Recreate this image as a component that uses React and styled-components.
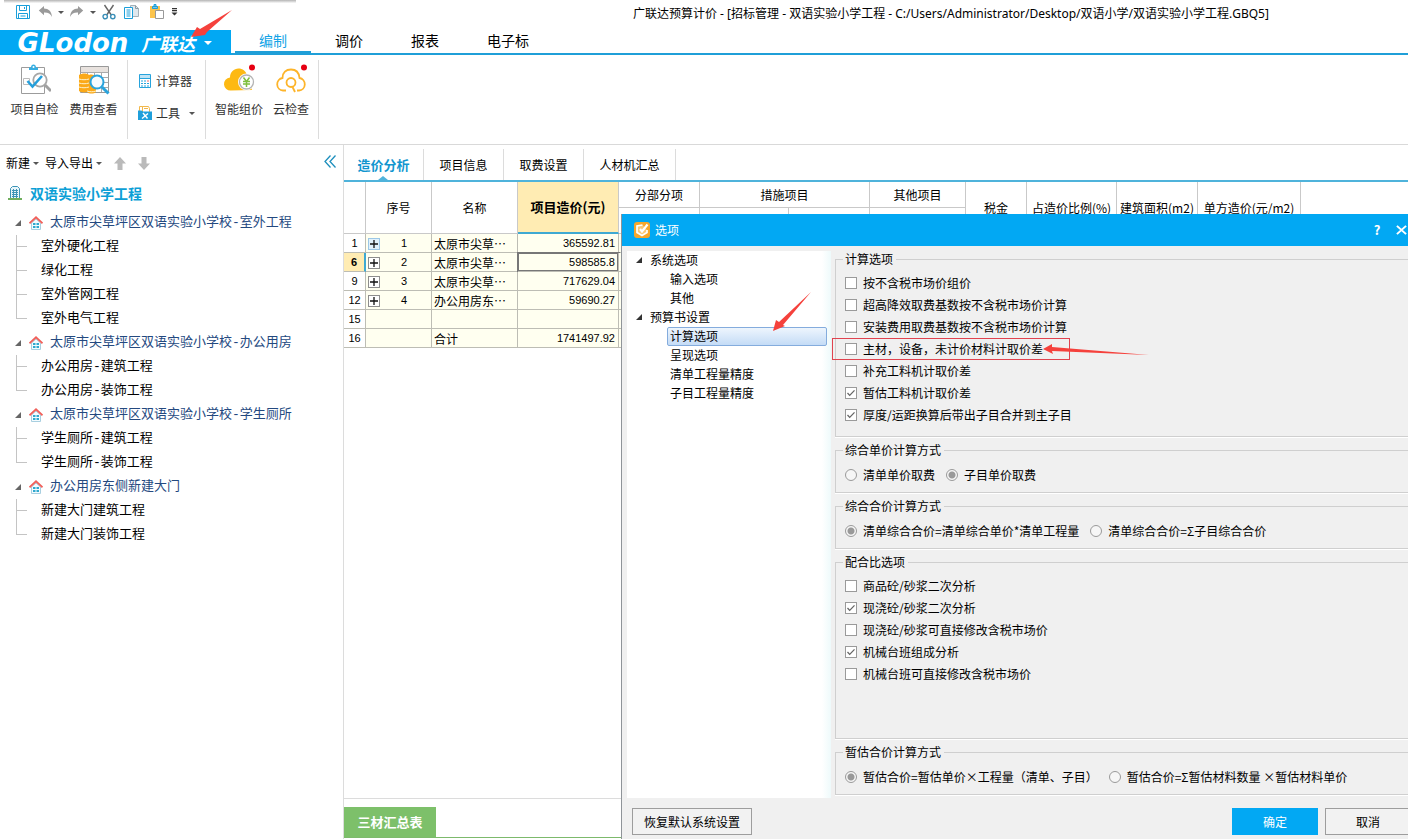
import React from 'react';
import styled, { createGlobalStyle, css } from 'styled-components';

const blue = '#02a8f3';
const lineBlue = '#4fb3db';

const GlobalStyle = createGlobalStyle`
  *, *::before, *::after { box-sizing: border-box; }
  body { margin: 0; background: #fff; }
  body, button, input, table {
    font-family: 'Noto Sans CJK SC', 'Liberation Sans', sans-serif;
    font-size: 12px;
    line-height: 16px;
    color: #000;
  }
  button { border: 0; padding: 0; background: none; }
  ul { list-style: none; margin: 0; padding: 0; }
`;

const Page = styled.div`
  position: relative;
  display: flex;
  flex-direction: column;
  min-height: 100vh;
  overflow: hidden;
`;

/* ---------- title bar ---------- */
const TitleBar = styled.header`
  display: flex;
  align-items: center;
  height: 30px;
  padding: 0 12px 6px;
`;
const TopShade = styled.div`
  position: absolute;
  top: 0;
  left: 4px;
  width: 292px;
  height: 3px;
  background: linear-gradient(#b4b4b4, #fafafa);
`;
const QuickButton = styled.button`
  display: flex;
  align-items: center;
  justify-content: center;
  width: ${(p) => p.$w}px;
  height: 18px;
`;
const WindowTitle = styled.h1`
  margin: 0 0 0 453px;
  padding-top: 4px;
  font: 400 12px/16px 'Noto Sans', 'Noto Sans CJK SC', sans-serif;
  white-space: nowrap;
`;

/* ---------- main menu ---------- */
const MenuBar = styled.nav`
  display: flex;
  height: 25px;
  border-bottom: 2px solid #1f9fd8;
`;
const Brand = styled.button`
  display: flex;
  align-items: center;
  width: 231px;
  height: 25px;
  margin-right: 4px;
  padding-left: 14px;
  background: ${blue};
  color: #fff;
  white-space: nowrap;
`;
const BrandLatin = styled.span`
  width: 118px;
  font: italic 700 26px/24px 'DejaVu Sans', sans-serif;
`;
const BrandHan = styled.span`
  width: 72px;
  font: italic 700 18px/24px 'Noto Sans CJK SC', sans-serif;
`;
const MenuTab = styled.button`
  height: 23px;
  padding: 0 24px 2px;
  font-size: 14px;
  line-height: 18px;
  border-bottom: 2px solid ${(p) => (p.$active ? '#1f9fd8' : 'transparent')};
  color: ${(p) => (p.$active ? '#12a3e6' : '#000')};
`;

/* ---------- ribbon ---------- */
const Ribbon = styled.div`
  display: flex;
  height: 90px;
  padding: 5px 0;
  border-bottom: 1px solid #d9d9d9;
`;
const RibbonGroup = styled.div`
  display: flex;
  flex-direction: ${(p) => (p.$column ? 'column' : 'row')};
  padding: ${(p) => p.$pad};
  border-right: 1px solid #dcdcdc;
`;
const BigButton = styled.button`
  display: flex;
  flex-direction: column;
  align-items: center;
  gap: 5px;
  width: ${(p) => p.$w}px;
  height: 60px;
  color: #333;
  white-space: nowrap;
`;
const SmallButton = styled.button`
  display: flex;
  align-items: center;
  gap: 4px;
  width: 57px;
  height: 32px;
  color: #333;
  white-space: nowrap;
`;
const PushRight = styled.span`
  display: flex;
  margin-left: auto;
`;

/* ---------- workspace ---------- */
const Workspace = styled.div`
  display: flex;
  flex: 1;
`;
const Sidebar = styled.aside`
  flex: none;
  width: 344px;
  border-right: 1px solid #dcdcdc;
`;
const SideTools = styled.div`
  display: flex;
  align-items: center;
  height: 34px;
  padding: 2px 7px 0 6px;
`;
const SideButton = styled.button`
  display: flex;
  align-items: center;
  gap: 3px;
  margin-right: 6px;
  white-space: nowrap;
`;
const MoveButton = styled.button`
  display: flex;
  justify-content: center;
  width: 24px;
`;
const ProjectTitle = styled.h2`
  display: flex;
  align-items: center;
  gap: 8px;
  height: 28px;
  margin: 0 0 4px;
  padding-left: 8px;
  font-size: 14px;
  line-height: 20px;
  color: #0d9fd6;
`;
const TreeNode = styled.div`
  display: flex;
  align-items: center;
  height: 24px;
  padding-left: 14px;
  font: 400 13px/20px 'Liberation Mono', 'Noto Sans CJK SC', sans-serif;
  color: #24497f;
  white-space: nowrap;
  svg { margin-right: 7px; }
`;
const TreeLeaf = styled.li`
  display: flex;
  align-items: center;
  height: 24px;
  font: 400 13px/20px 'Liberation Mono', 'Noto Sans CJK SC', sans-serif;
  white-space: nowrap;
  &::before {
    content: '';
    width: 11px;
    height: 24px;
    margin: 0 14px 0 16px;
    background:
      linear-gradient(#c4c4c4, #c4c4c4) 0 0 / 1px ${(p) => (p.$last ? '12px' : '24px')} no-repeat,
      linear-gradient(#c4c4c4, #c4c4c4) 0 11px / 11px 1px no-repeat;
  }
`;

const Content = styled.main`
  display: flex;
  flex-direction: column;
  flex: 1;
  min-width: 0;
`;
const ContentTabs = styled.div`
  display: flex;
  height: 37px;
  padding-top: 4px;
  border-bottom: 2px solid ${lineBlue};
`;
const ContentTab = styled.button`
  position: relative;
  width: ${(p) => p.$w}px;
  height: 31px;
  border-right: 1px solid #dcdcdc;
  white-space: nowrap;
  ${(p) => p.$active && css`
    font-size: 13px;
    font-weight: 700;
    color: #1296cf;
    &::after {
      content: '';
      position: absolute;
      left: 34px;
      bottom: 0;
      border: 5px solid transparent;
      border-top: 0;
      border-bottom: 4px solid ${lineBlue};
    }
  `}
`;
const TableArea = styled.div`
  flex: 1;
  border-bottom: 1px solid #dcdcdc;
`;
const Table = styled.table`
  table-layout: fixed;
  width: 957px;
  border-collapse: separate;
  border-spacing: 0;
`;
const Th = styled.th`
  height: 26px;
  padding: 0;
  font-weight: ${(p) => (p.$hot ? 700 : 400)};
  font-size: ${(p) => (p.$hot ? 13 : 12)}px;
  white-space: nowrap;
  border-right: 1px solid #c9c9c9;
  border-bottom: ${(p) => (p.$hot ? '2px solid #3fa9d2' : '1px solid #c9c9c9')};
  background: ${(p) => (p.$hot ? '#ffecb3' : '#fff')};
`;
const Td = styled.td`
  height: 19px;
  padding: 1px 3px 0 2px;
  overflow: hidden;
  white-space: nowrap;
  text-align: ${(p) => p.$align || 'left'};
  background: #fffff0;
  border-right: 1px solid #bdbdb4;
  border-bottom: 1px solid #bdbdb4;
  line-height: 17px;
  ${(p) => p.$num && css`font-family: 'Liberation Sans', sans-serif; font-size: 11px;`}
  ${(p) => p.$current && css`box-shadow: inset 0 0 0 1px #777, 0 0 0 1px #777;`}
`;
const RowHead = styled.th`
  height: 19px;
  padding: 1px 0 0;
  font: ${(p) => (p.$current ? 700 : 400)} 11px/17px 'Liberation Sans', sans-serif;
  background: ${(p) => (p.$current ? '#ffecb3' : '#fff')};
  border-right: ${(p) => (p.$current ? '2px solid #3fa9d2' : '1px solid #bdbdb4')};
  border-bottom: 1px solid #bdbdb4;
`;
const IndexCell = styled.div`
  display: grid;
  grid-template-columns: 12px 1fr;
  align-items: center;
  text-align: center;
`;
const Expander = styled.button`
  display: flex;
  align-items: center;
  justify-content: center;
  width: 12px;
  height: 12px;
  border: 1px solid ${(p) => (p.$tint ? '#9cc7e6' : '#8d8d8d')};
  background: ${(p) => (p.$tint ? '#e1f1fb' : '#fff')};
`;
const BottomBar = styled.div`
  display: flex;
  height: 40px;
  padding-top: 8px;
`;
const SheetTabs = styled.div`
  flex: 1;
  height: 31px;
  border-bottom: 1px solid #7dba6c;
`;
const SheetTab = styled.button`
  width: 92px;
  height: 30px;
  background: #7dc06a;
  color: #fff;
  font-size: 13px;
  font-weight: 700;
`;

/* ---------- options dialog ---------- */
const Dialog = styled.section`
  position: absolute;
  top: 214px;
  left: 621px;
  right: -12px;
  bottom: 0;
  display: flex;
  flex-direction: column;
  background: #f0f0f0;
  border-left: 1px solid #8f9499;
`;
const DialogTitle = styled.header`
  display: flex;
  align-items: center;
  height: 32px;
  padding: 0 12px;
  gap: 5px;
  background: ${blue};
  color: #fff;
`;
const TitleButtons = styled.span`
  display: flex;
  gap: 10px;
  margin-left: auto;
`;
const TitleButton = styled.button`
  display: flex;
  align-items: center;
  justify-content: center;
  width: 14px;
  height: 16px;
  color: #fff;
  font-size: 13px;
  font-weight: 700;
`;
const DialogBody = styled.div`
  display: flex;
  flex: 1;
  gap: 4px;
  padding: 5px 0 0 5px;
`;
const OptionTree = styled.ul`
  width: 204px;
  background: linear-gradient(90deg, #fff 195px, #eefafb 204px);
`;
const OptionParent = styled.li`
  display: flex;
  align-items: center;
  gap: 7px;
  height: 19px;
  padding: 0 0 2px 8px;
`;
const OptionItem = styled.li`
  position: relative;
  height: 19px;
  margin: 0 4px 0 40px;
  padding-left: 2px;
  line-height: 15px;
  border: 1px solid ${(p) => (p.$selected ? '#84acdd' : 'transparent')};
  border-radius: 2px;
  background: ${(p) => (p.$selected ? 'linear-gradient(#eef5fd, #c4dcf6)' : 'none')};
`;
const Groups = styled.div`
  display: flex;
  flex-direction: column;
  flex: 1;
  gap: 5px;
  padding-bottom: 3px;
`;
const Group = styled.fieldset`
  margin: 0;
  padding: ${(p) => (p.$row ? '6px 9px' : '5px 9px 10px')};
  min-width: 0;
  flex: ${(p) => (p.$grow ? '1' : 'none')};
  border: 1px solid #cfcfcf;
  box-shadow: 0 1px 0 #fff;
`;
const Legend = styled.legend`
  padding: 0 3px 0 2px;
  margin-left: -2px;
  height: 16px;
`;
const RadioRow = styled.div`
  display: flex;
  gap: 11px;
`;
const Choice = styled.label`
  position: relative;
  display: flex;
  align-items: center;
  gap: 6px;
  width: max-content;
  height: 22px;
  white-space: pre;
`;
const CheckInput = styled.input`
  appearance: none;
  width: 12px;
  height: 12px;
  margin: 0;
  border: 1px solid #9a9a9a;
  background: #fff;
  &:checked {
    background: #fff url("data:image/svg+xml,%3Csvg xmlns='http://www.w3.org/2000/svg' viewBox='0 0 10 10'%3E%3Cpath d='M1.5 5l2.2 2.4L8.5 2.4' fill='none' stroke='%23666' stroke-width='1.3'/%3E%3C/svg%3E");
  }
`;
const RadioInput = styled.input`
  appearance: none;
  width: 12px;
  height: 12px;
  margin: 0;
  border: 1px solid #9a9a9a;
  border-radius: 50%;
  background: #f6f6f6;
  &:checked { background: radial-gradient(circle, #999 0 3px, #f6f6f6 4px); }
`;
const Wide = styled.span`
  display: inline-block;
  width: 12px;
  text-align: center;
`;
const Marked = styled.span`
  position: absolute;
  top: 0;
  left: -13px;
  width: 238px;
  height: 22px;
  border: 1px solid #e0434f;
  pointer-events: none;
`;
const ArrowSvg = styled.svg`
  position: absolute;
  left: ${(p) => p.$x}px;
  top: ${(p) => p.$y}px;
  z-index: 2;
  overflow: visible;
  pointer-events: none;
`;
const DialogFooter = styled.footer`
  display: flex;
  align-items: center;
  gap: 7px;
  height: 41px;
  padding: 6px 9px 0 10px;
`;
const FooterButton = styled.button`
  width: ${(p) => p.$w}px;
  height: 27px;
  margin-left: ${(p) => (p.$push ? 'auto' : '0')};
  border: 1px solid ${(p) => (p.$primary ? blue : '#9d9d9d')};
  background: ${(p) => (p.$primary ? blue : '#f2f2f2')};
  color: ${(p) => (p.$primary ? '#fff' : '#000')};
`;

/* ---------- drawings ---------- */
const Caret = ({ color = '#555', w = 6 }) => (
  <svg width={w} height={Math.ceil(w / 2)} viewBox="0 0 6 3"><path d="M0 0h6L3 3z" fill={color} /></svg>
);
const Corner = ({ color = '#666' }) => (
  <svg width="8" height="8" viewBox="0 0 8 8"><path d="M7 1v6H1z" fill={color} /></svg>
);
const SaveIcon = () => (
  <svg width="14" height="14" viewBox="0 0 14 14" fill="none" stroke="#1a9fda">
    <path d="M.5.5h13v13H.5zM3.5.5v5h7v-5M2.5 13.5v-5h9v5M4.500 11h5" /><path d="M8.500 2v2" />
  </svg>
);
const UndoIcon = ({ flip }) => (
  <svg width="15" height="12" viewBox="0 0 15 12">
    <path transform={flip ? 'translate(15 0) scale(-1 1)' : undefined} d="M6 0v2.600c4.500 0 7.600 2.700 8 8.400C12.500 7.800 10 6.400 6 6.600v2.700L.8 4.600z" fill="#9a9a9a" />
  </svg>
);
const CutIcon = () => (
  <svg width="14" height="16" viewBox="0 0 14 16" fill="none" strokeWidth="1.400">
    <path d="M2.500 1l6.800 10M11.500 1L4.700 11" stroke="#666" />
    <circle cx="3.200" cy="12.600" r="2.200" stroke="#3a8fb8" /><circle cx="10.800" cy="12.600" r="2.200" stroke="#3a8fb8" />
  </svg>
);
const CopyIcon = () => (
  <svg width="16" height="16" viewBox="0 0 16 16" fill="#fff">
    <path d="M6.500 1.500h5l3 3v8h-8z" stroke="#a5b1b8" fill="#dfe8ee" /><path d="M11.500 1.500v3h3" fill="none" stroke="#8e9aa0" />
    <path d="M.5 3.500h8v11h-8z" stroke="#1a9fda" /><path d="M2.500 6h4M2.500 8h4M2.500 10h4M2.500 12h4" stroke="#1a9fda" />
  </svg>
);
const PasteIcon = () => (
  <svg width="16" height="16" viewBox="0 0 16 16">
    <path d="M1 2h10v12H1z" fill="#fcc44c" /><path d="M3.500 2.500h5v2h-5zM5 .5h2v2H5z" fill="#7cc5e8" stroke="#1a9fda" />
    <path d="M6.500 6.500h8v8h-8z" fill="#fff" stroke="#999" />
  </svg>
);
const MoreIcon = () => (
  <svg width="7" height="8" viewBox="0 0 7 8" fill="#333"><path d="M1 0h5v1.200H1zM1 2h5v1.200H1zM.5 4.500h6l-3 3z" /></svg>
);
const CheckupIcon = () => (
  <svg width="32" height="32" viewBox="0 0 32 32" fill="none">
    <path d="M2.500 3.500h23v26h-23z" stroke="#9c9c9c" fill="#fff" />
    <path d="M10 3.500h2c0-2 1-3 2.500-3s2.500 1 2.500 3h2v2.500h-9z" fill="#35aee2" /><circle cx="14.500" cy="3" r="1" fill="#fff" />
    <path d="M4.500 14.500h6v6h-6z" stroke="#bbb" />
    <circle cx="21" cy="16" r="6.700" stroke="#a7a7a7" strokeWidth="1.800" fill="#fff" />
    <path d="M26 21l6 6" stroke="#a0a0a0" strokeWidth="3" />
    <path d="M8.500 17l5 5.500L23 12" stroke="#259fdb" strokeWidth="2.600" />
  </svg>
);
const FeeIcon = () => (
  <svg width="32" height="32" viewBox="0 0 32 32" fill="none">
    <path d="M2.500 2.500h28v26h-28z" stroke="#999" fill="#fff" /><path d="M3 3h27v5H3z" fill="#e8e2de" />
    <path d="M2.500 8.500h28M2.500 13.500h28M2.500 18.500h28M2.500 23.500h28M9.500 8v20M16.500 8v20M23.500 8v20" stroke="#aaa" />
    <path d="M1 11c3-2 8-2 10 0 3-1 6 0 7 2v15c-2 2-7 2-9 0-3 1-7 0-8-1z" fill="#fba918" />
    <path d="M1 15c3 1 7 1 10 0M1 19c3 1 7 1 10 0M1 23c3 1 7 1 10 0M9 27c3 1 6 1 9 0" stroke="#fff2cc" />
    <circle cx="19" cy="18" r="6.500" stroke="#2aa4dd" strokeWidth="2" fill="#f6fbfe" /><path d="M24 23l6.500 6.500" stroke="#2aa4dd" strokeWidth="3" />
  </svg>
);
const CalculatorIcon = () => (
  <svg width="14" height="16" viewBox="0 0 14 16" fill="none">
    <path d="M1.500 1.500h11v13h-11z" stroke="#27a3dc" /><path d="M2 2h10v3H2z" fill="#bfe3f5" /><path d="M2 5.500h10" stroke="#27a3dc" />
    <path d="M3 8h2M6 8h2M3 10.500h2M6 10.500h2M3 13h2M6 13h2M9 10.500h2M9 13h2" stroke="#27a3dc" /><path d="M9 8h2" stroke="#e66" />
  </svg>
);
const ToolsIcon = () => (
  <svg width="14" height="16" viewBox="0 0 14 16" fill="none">
    <path d="M1.500 1.500h5v5h-5z" stroke="#f2b84b" fill="#fff" /><path d="M4.500 1.500h6l1 2v4h-7z" stroke="#f2b84b" fill="#fff" /><path d="M6 3.500h4" stroke="#f2b84b" />
    <path d="M0 5.500h3.500l1.500 1h9V15H0z" fill="#1f9fdb" /><path d="M4 13.500l6-5M5 8l4.500 5.500" stroke="#fff" strokeWidth="1.400" />
  </svg>
);
const SmartPriceIcon = () => (
  <svg width="32" height="32" viewBox="0 0 32 32" fill="none">
    <path d="M8 26.500a6.500 6.500 0 0 1-1-13C7 8 11 4.500 15.500 4.500c4 0 7.500 2.500 8.300 6.500 3 .5 5 3 5 6v9z" fill="#fdb913" />
    <circle cx="23.500" cy="18" r="8.500" fill="#fff" /><circle cx="23.500" cy="18" r="7" stroke="#b4b4b4" strokeWidth="1.300" fill="#fff" />
    <path d="M20.500 13.500l3 4 3-4M20 17.500h7M20 20h7M23.500 17v6" stroke="#7fbf3f" strokeWidth="1.500" />
    <circle cx="29" cy="3.500" r="3" fill="#e60012" />
  </svg>
);
const CloudCheckIcon = () => (
  <svg width="32" height="32" viewBox="0 0 32 32" fill="none">
    <path d="M11 26.500H8A6.300 6.300 0 0 1 7.500 14C7.500 8.500 11 5.500 16 5.500S24 8.500 24.500 14a6.300 6.300 0 0 1-.5 12.500h-2" stroke="#fdb42a" strokeWidth="1.800" />
    <circle cx="16" cy="18.500" r="4.500" stroke="#fdb42a" strokeWidth="1.800" /><path d="M17.500 23l2.500 5" stroke="#fdb42a" strokeWidth="1.800" />
    <circle cx="29" cy="3.500" r="3" fill="#e60012" />
  </svg>
);
const BuildingIcon = () => (
  <svg width="14" height="14" viewBox="0 0 14 14" fill="none">
    <path d="M2.500 12.500v-10L4.500.5h5l2 2v10" stroke="#3d94b6" fill="#e9f5fa" /><path d="M4 4.500h6M4 6.500h6M4 8.500h6M4 10.500h6M5.500 3v9M8.500 3v9" stroke="#3d94b6" />
    <path d="M0 13h14" stroke="#6fae5c" strokeWidth="2" />
  </svg>
);
const HomeIcon = () => (
  <svg width="14" height="14" viewBox="0 0 14 14" fill="none">
    <path d="M2.500 7v6.500h9V7L7 3z" fill="#f4fbfe" stroke="#a8cfe0" /><path d="M.5 7.300L7 1.300l6.500 6" stroke="#f0605a" strokeWidth="1.800" />
    <path d="M4 7h2.500v2H4zM7.500 7H10v2H7.500zM4 10h2.500v2H4zM7.500 10H10v2H7.500z" fill="#2fa9cf" />
  </svg>
);
const MoveArrow = ({ down }) => (
  <svg width="12" height="13" viewBox="0 0 12 13"><path transform={down ? 'rotate(180 6 6.500)' : undefined} d="M6 0l6 6.500H8.500V13h-5V6.500H0z" fill="#bababa" /></svg>
);
const CollapseIcon = () => (
  <svg width="12" height="13" viewBox="0 0 12 13" fill="none" stroke="#1d8fbd" strokeWidth="1.300"><path d="M6.500.5l-5.500 6 5.500 6M11.500.5l-5.500 6 5.500 6" /></svg>
);
const PlusIcon = () => (
  <svg width="8" height="8" viewBox="0 0 8 8"><path d="M0 4h8M4 0v8" stroke="#111" strokeWidth="1.300" /></svg>
);
const OptionsIcon = () => (
  <svg width="16" height="16" viewBox="0 0 16 16" fill="none">
    <rect width="16" height="16" rx="3" fill="#f7a72c" />
    <path d="M8.500 3L3 4v6.500l5 3 5-3V8" stroke="#fff" strokeWidth="1.700" fill="#fbc876" /><path d="M6 7l2 2.500 5.500-7" stroke="#fff" strokeWidth="2.200" />
  </svg>
);
const CloseIcon = () => (
  <svg width="11" height="10" viewBox="0 0 12 10"><path d="M1 .5l10 9M11 .5l-10 9" stroke="#fff" strokeWidth="2.200" /></svg>
);
const Arrow = ({ x, y, w, h, points }) => (
  <ArrowSvg $x={x} $y={y} width={w} height={h} viewBox={`0 0 ${w} ${h}`} aria-hidden="true"><polygon points={points} fill="#f5413c" /></ArrowSvg>
);

/* ---------- data ---------- */
const tree = [
  ['太原市尖草坪区双语实验小学校-室外工程', ['室外硬化工程', '绿化工程', '室外管网工程', '室外电气工程']],
  ['太原市尖草坪区双语实验小学校-办公用房', ['办公用房-建筑工程', '办公用房-装饰工程']],
  ['太原市尖草坪区双语实验小学校-学生厕所', ['学生厕所-建筑工程', '学生厕所-装饰工程']],
  ['办公用房东侧新建大门', ['新建大门建筑工程', '新建大门装饰工程']],
];
const columns = [22, 66, 86, 101, 81, 89, 81, 96, 61, 90, 81, 103];
const rows = [
  ['1', '1', '太原市尖草…', '365592.81'],
  ['6', '2', '太原市尖草…', '598585.8'],
  ['9', '3', '太原市尖草…', '717629.04'],
  ['12', '4', '办公用房东…', '59690.27'],
  ['15', '', '', ''],
  ['16', '', '合计', '1741497.92'],
];
const calcOptions = [
  ['按不含税市场价组价', false],
  ['超高降效取费基数按不含税市场价计算', false],
  ['安装费用取费基数按不含税市场价计算', false],
  ['主材，设备，未计价材料计取价差', false, true],
  ['补充工料机计取价差', false],
  ['暂估工料机计取价差', true],
  ['厚度/运距换算后带出子目合并到主子目', true],
];
const mixOptions = [
  ['商品砼/砂浆二次分析', false],
  ['现浇砼/砂浆二次分析', true],
  ['现浇砼/砂浆可直接修改含税市场价', false],
  ['机械台班组成分析', true],
  ['机械台班可直接修改含税市场价', false],
];

const Check = ({ item: [label, on, marked] }) => (
  <Choice>
    <CheckInput type="checkbox" defaultChecked={on} />
    {label}
    {marked && <Marked />}
    {marked && <Arrow x={198} y={6} w={106} h={12} points="0,5 9,0 9,3 106,11 9,7 10,10" />}
  </Choice>
);
const Radio = ({ name, on, children }) => (
  <Choice><RadioInput type="radio" name={name} defaultChecked={on} /><span>{children}</span></Choice>
);

export default function App() {
  return (
    <Page>
      <GlobalStyle />
      <TopShade />
      <TitleBar>
        <QuickButton $w={22} aria-label="保存"><SaveIcon /></QuickButton>
        <QuickButton $w={22} aria-label="撤销"><UndoIcon /></QuickButton>
        <QuickButton $w={10} aria-label="撤销列表"><Caret /></QuickButton>
        <QuickButton $w={20} aria-label="恢复"><UndoIcon flip /></QuickButton>
        <QuickButton $w={14} aria-label="恢复列表"><Caret /></QuickButton>
        <QuickButton $w={18} aria-label="剪切"><CutIcon /></QuickButton>
        <QuickButton $w={28} aria-label="复制"><CopyIcon /></QuickButton>
        <QuickButton $w={22} aria-label="粘贴"><PasteIcon /></QuickButton>
        <QuickButton $w={12} aria-label="更多"><MoreIcon /></QuickButton>
        <WindowTitle>广联达预算计价 - [招标管理 - 双语实验小学工程 - C:/Users/Administrator/Desktop/双语小学/双语实验小学工程.GBQ5]</WindowTitle>
      </TitleBar>
      <MenuBar>
        <Brand><BrandLatin>GLodon</BrandLatin><BrandHan>广联达</BrandHan><Caret color="#fff" w={8} /></Brand>
        <MenuTab $active>编制</MenuTab>
        <MenuTab>调价</MenuTab>
        <MenuTab>报表</MenuTab>
        <MenuTab>电子标</MenuTab>
      </MenuBar>
      <Arrow x={191} y={10} w={42} h={28} points="0,27 6,17 9,19 41,0 16,22 14,25" />
      <Ribbon>
        <RibbonGroup $pad="4px 4px 0 5px">
          <BigButton $w={59}><CheckupIcon />项目自检</BigButton>
          <BigButton $w={59}><FeeIcon />费用查看</BigButton>
        </RibbonGroup>
        <RibbonGroup $column $pad="5px 10px">
          <SmallButton><CalculatorIcon />计算器</SmallButton>
          <SmallButton><ToolsIcon />工具<PushRight><Caret /></PushRight></SmallButton>
        </RibbonGroup>
        <RibbonGroup $pad="4px 1px 0 7px">
          <BigButton $w={52}><SmartPriceIcon />智能组价</BigButton>
          <BigButton $w={52}><CloudCheckIcon />云检查</BigButton>
        </RibbonGroup>
      </Ribbon>
      <Workspace>
        <Sidebar>
          <SideTools>
            <SideButton>新建<Caret /></SideButton>
            <SideButton>导入导出<Caret /></SideButton>
            <MoveButton aria-label="上移"><MoveArrow /></MoveButton>
            <MoveButton aria-label="下移"><MoveArrow down /></MoveButton>
            <PushRight><button aria-label="收起"><CollapseIcon /></button></PushRight>
          </SideTools>
          <ProjectTitle><BuildingIcon />双语实验小学工程</ProjectTitle>
          {tree.map(([name, leaves]) => (
            <React.Fragment key={name}>
              <TreeNode><Corner /><HomeIcon />{name}</TreeNode>
              <ul>{leaves.map((leaf, i) => <TreeLeaf key={leaf} $last={i === leaves.length - 1}>{leaf}</TreeLeaf>)}</ul>
            </React.Fragment>
          ))}
        </Sidebar>
        <Content>
          <ContentTabs>
            <ContentTab $w={80} $active>造价分析</ContentTab>
            <ContentTab $w={80}>项目信息</ContentTab>
            <ContentTab $w={80}>取费设置</ContentTab>
            <ContentTab $w={92}>人材机汇总</ContentTab>
          </ContentTabs>
          <TableArea>
            <Table>
              <colgroup>{columns.map((w, i) => <col key={i} width={w} />)}</colgroup>
              <thead>
                <tr>
                  <Th rowSpan={2} /><Th rowSpan={2}>序号</Th><Th rowSpan={2}>名称</Th><Th rowSpan={2} $hot>项目造价(元)</Th>
                  <Th>分部分项</Th><Th colSpan={2}>措施项目</Th><Th>其他项目</Th>
                  <Th rowSpan={2}>税金</Th><Th rowSpan={2}>占造价比例(%)</Th><Th rowSpan={2}>建筑面积(m2)</Th><Th rowSpan={2}>单方造价(元/m2)</Th>
                </tr>
                <tr><Th /><Th /><Th /><Th /></tr>
              </thead>
              <tbody>
                {rows.map(([n, idx, name, cost], r) => (
                  <tr key={n}>
                    <RowHead $current={r === 1}>{n}</RowHead>
                    <Td $num>
                      {idx && <IndexCell><Expander $tint={r === 0} aria-label="展开"><PlusIcon /></Expander>{idx}</IndexCell>}
                    </Td>
                    <Td>{name}</Td>
                    <Td $num $align="right" $current={r === 1}>{cost}</Td>
                    {columns.slice(4).map((_, i) => <Td key={i} />)}
                  </tr>
                ))}
              </tbody>
            </Table>
          </TableArea>
          <BottomBar><SheetTabs><SheetTab>三材汇总表</SheetTab></SheetTabs></BottomBar>
        </Content>
      </Workspace>

      <Dialog role="dialog" aria-label="选项">
        <DialogTitle>
          <OptionsIcon />选项
          <TitleButtons>
            <TitleButton aria-label="帮助">?</TitleButton>
            <TitleButton aria-label="关闭"><CloseIcon /></TitleButton>
          </TitleButtons>
        </DialogTitle>
        <DialogBody>
          <OptionTree>
            <OptionParent><Corner color="#333" />系统选项</OptionParent>
            <OptionItem>输入选项</OptionItem>
            <OptionItem>其他</OptionItem>
            <OptionParent><Corner color="#333" />预算书设置</OptionParent>
            <OptionItem $selected>计算选项
              <Arrow x={105} y={-36} w={38} h={40} points="0,39 3,28 6,30 38,0 10,33 12,34" />
            </OptionItem>
            <OptionItem>呈现选项</OptionItem>
            <OptionItem>清单工程量精度</OptionItem>
            <OptionItem>子目工程量精度</OptionItem>
          </OptionTree>
          <Groups>
            <Group><Legend>计算选项</Legend>{calcOptions.map((o) => <Check key={o[0]} item={o} />)}</Group>
            <Group $row>
              <Legend>综合单价计算方式</Legend>
              <RadioRow><Radio name="unit">清单单价取费</Radio><Radio name="unit" on>子目单价取费</Radio></RadioRow>
            </Group>
            <Group $row>
              <Legend>综合合价计算方式</Legend>
              <RadioRow><Radio name="total" on>清单综合合价=清单综合单价*清单工程量</Radio><Radio name="total">清单综合合价=Σ子目综合合价</Radio></RadioRow>
            </Group>
            <Group $grow><Legend>配合比选项</Legend>{mixOptions.map((o) => <Check key={o[0]} item={o} />)}</Group>
            <Group $row>
              <Legend>暂估合价计算方式</Legend>
              <RadioRow>
                <Radio name="est" on>暂估合价=暂估单价<Wide>×</Wide>工程量（清单、子目）</Radio>
                <Radio name="est">暂估合价=Σ暂估材料数量 <Wide>×</Wide>暂估材料单价</Radio>
              </RadioRow>
            </Group>
          </Groups>
        </DialogBody>
        <DialogFooter>
          <FooterButton $w={120}>恢复默认系统设置</FooterButton>
          <FooterButton $w={86} $primary $push>确定</FooterButton>
          <FooterButton $w={86}>取消</FooterButton>
        </DialogFooter>
      </Dialog>
    </Page>
  );
}
